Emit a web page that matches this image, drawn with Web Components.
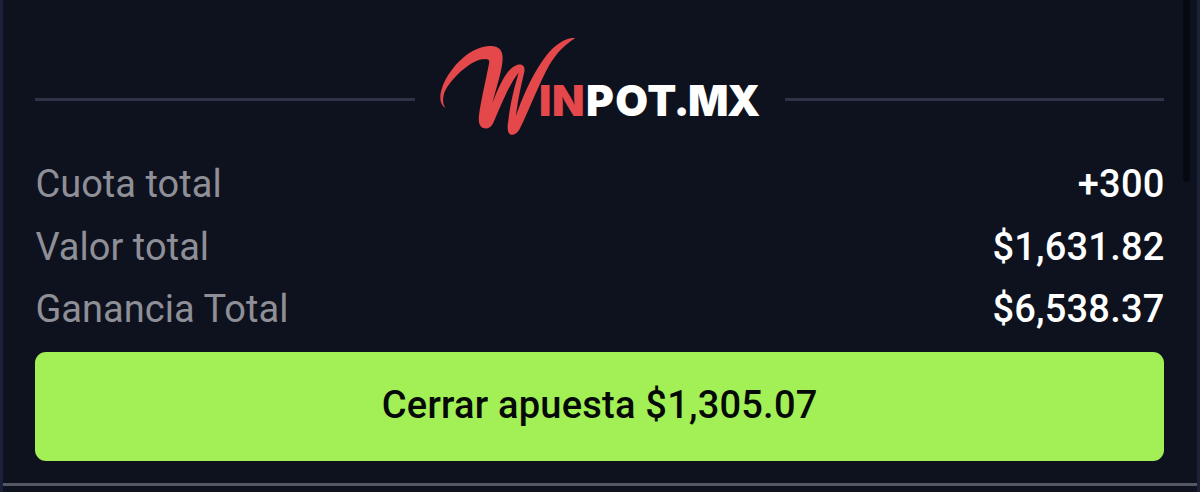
<!DOCTYPE html>
<html lang="es">
<head>
<meta charset="UTF-8">
<title>Winpot.mx</title>
<style>
    body {
        margin: 0;
        background: #0e121e;
        font-family: Roboto, "Liberation Sans", sans-serif;
    }
</style>
</head>
<body>

<bet-ticket>
    <brand-divider slot="header"></brand-divider>
    <bet-row label="Cuota total">+300</bet-row>
    <bet-row label="Valor total">$1,631.82</bet-row>
    <bet-row label="Ganancia Total">$6,538.37</bet-row>
    <cashout-button slot="action">Cerrar apuesta $1,305.07</cashout-button>
</bet-ticket>

<script>
    // Panel with the side borders, the scroll thumb and the bottom rule
    class BetTicket extends HTMLElement {
        constructor() {
            super();
            this.attachShadow({ mode: 'open' });
            this.shadowRoot.innerHTML = `
                <style>
                    :host {
                        display: flex;
                        flex-direction: column;
                        position: relative;
                        box-sizing: border-box;
                        height: 492px;
                        padding: 37px 33px 0 32.4px;
                        border-left: 3px solid #1c213b;
                        border-right: 3px solid #1d2137;
                        overflow: hidden;
                    }

                    .rows {
                        display: flex;
                        flex-direction: column;
                        height: 203px;
                        padding-top: 12px;
                    }

                    .rule {
                        height: 3px;
                        margin: 22px -33px 0 -32.4px;
                        background: #555762;
                    }

                    .thumb {
                        position: absolute;
                        top: 0;
                        right: 7px;
                        width: 7px;
                        height: 182px;
                        border-radius: 0 0 4px 4px;
                        background: #060911;
                    }

                    .rows {
                        box-sizing: border-box;
                        height: 215px;
                        padding-top: 16px;
                    }
                </style>
                <slot name="header"></slot>
                <div class="rows"><slot></slot></div>
                <slot name="action"></slot>
                <div class="rule"></div>
                <div class="thumb"></div>
            `;
        }
    }

    class BrandDivider extends HTMLElement {
        constructor() {
            super();
            this.attachShadow({ mode: 'open' });
            this.shadowRoot.innerHTML = `
                <style>
                    :host {
                        display: flex;
                        align-items: flex-start;
                        height: 100px;
                        gap: 25px;
                    }

                    .line {
                        flex: 1;
                        height: 3px;
                        margin-top: 61px;
                        background: #2e3347;
                    }

                    svg {
                        display: block;
                        flex: none;
                    }

                    text {
                        font-family: Inter, Roboto, sans-serif;
                        font-size: 127px;
                        font-weight: 900;
                    }
                </style>
                <div class="line"></div>
                <svg width="320" height="100" viewBox="30 21 960 300">
                    <path fill="#e5484a" d="M46 233 C30 225 27 200 36 175 C52 125 110 52 178 48 C208 46 222 62 217 98 C213 130 200 170 187 220 C210 160 235 110 263 104 C277 101 288 108 282 130 C275 160 264 205 258 258 C287 170 340 70 385 42 C405 28 425 22 435 25 C400 48 380 70 358 105 C325 165 295 245 270 295 C262 312 250 316 242 314 C232 310 231 290 235 272 C240 220 255 165 266 128 C235 165 210 235 190 278 C182 295 170 297 160 294 C147 288 145 275 147 255 C155 200 172 130 178 95 C178 85 165 86 155 88 C110 98 50 160 41 195 C37 215 40 225 46 233Z"/>
                    <text y="259" fill="#e5484a" x="327 366">IN</text>
                    <text y="259" fill="#fff" x="468 556 652 731 774 891">POT.MX</text>
                </svg>
                <div class="line"></div>
            `;
        }
    }

    class BetRow extends HTMLElement {
        constructor() {
            super();
            this.attachShadow({ mode: 'open' });
        }

        connectedCallback() {
            this.shadowRoot.innerHTML = `
                <style>
                    :host {
                        display: flex;
                        flex: none;
                        justify-content: space-between;
                        height: 62.6px;
                        line-height: 62.6px;
                        font-size: 38px;
                    }

                    .label {
                        color: #8e8f97;
                        letter-spacing: 0.04px;
                    }

                    .value {
                        color: #fff;
                        font-weight: 500;
                        letter-spacing: 0.2px;
                        margin-right: -0.5px;
                    }
                </style>
                <span class="label">${this.getAttribute('label')}</span>
                <span class="value"><slot></slot></span>
            `;
        }
    }

    class CashoutButton extends HTMLElement {
        constructor() {
            super();
            this.attachShadow({ mode: 'open' });
            this.shadowRoot.innerHTML = `
                <style>
                    :host {
                        display: block;
                    }

                    button {
                        display: block;
                        width: 100%;
                        height: 109px;
                        padding: 0 0 3px;
                        border: 0;
                        border-radius: 11px;
                        background: #a3f056;
                        color: #050a08;
                        font: 500 38px Roboto, "Liberation Sans", sans-serif;
                        letter-spacing: 0.22px;
                        cursor: pointer;
                    }
                </style>
                <button type="button"><slot></slot></button>
            `;
        }
    }

    customElements.define('bet-ticket', BetTicket);
    customElements.define('brand-divider', BrandDivider);
    customElements.define('bet-row', BetRow);
    customElements.define('cashout-button', CashoutButton);
</script>
</body>
</html>
